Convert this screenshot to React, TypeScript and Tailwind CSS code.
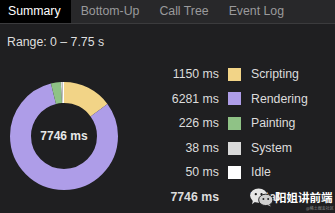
import React from "react";

const segments = [
  { label: "Scripting", ms: 1150, color: "#f2d487" },
  { label: "Rendering", ms: 6281, color: "#ae9de8" },
  { label: "Painting", ms: 226, color: "#8fc286" },
  { label: "System", ms: 38, color: "#dadada" },
  { label: "Idle", ms: 50, color: "#ffffff" },
];

const total = 7746;

const Donut: React.FC = () => {
  const r = 43.5;
  const c = 2 * Math.PI * r;
  let offset = 0;
  return (
    <div className="relative w-[108px] h-[108px]">
      <svg width="108" height="108" viewBox="0 0 108 108" className="-rotate-90">
        {segments.map((s) => {
          const len = (s.ms / total) * c;
          const el = (
            <circle
              key={s.label}
              cx="54"
              cy="54"
              r={r}
              fill="none"
              stroke={s.color}
              strokeWidth="21"
              strokeDasharray={`${len} ${c - len}`}
              strokeDashoffset={-offset}
            />
          );
          offset += len;
          return el;
        })}
      </svg>
      <div className="absolute inset-0 flex items-center justify-center text-[12px] font-bold text-[#e8e8e8]">
        {total} ms
      </div>
    </div>
  );
};

export default function App() {
  const tabs = ["Summary", "Bottom-Up", "Call Tree", "Event Log"];
  return (
    <div
      className="relative w-[335px] h-[213px] overflow-hidden bg-[#1f1f21] text-[#dcdcdc]"
      style={{ fontFamily: '"Liberation Sans", Arial, sans-serif' }}
    >
      <div className="flex h-[24px] bg-[#28282a] border-b border-[#3b3b3d] text-[12.3px]">
        {tabs.map((t, i) => (
          <div
            key={t}
            className={`flex items-center h-[23px] px-[10px] ${
              i === 0 ? "bg-black text-white pl-[8px]" : "text-[#9a9a9c]"
            }`}
          >
            {t}
          </div>
        ))}
      </div>

      <div className="pl-[7px] pt-[10px] leading-[16px] text-[12.3px] text-[#dedede]">
        Range: 0 – 7.75 s
      </div>

      <div className="flex">
        <div className="ml-[10px] mt-[32px]">
          <Donut />
        </div>
        <div className="ml-[41px] mt-[12px] flex flex-col text-[12.3px]">
          {segments.map((s) => (
            <div key={s.label} className="flex items-center h-[24.6px]">
              <div className="w-[60px] text-right">{s.ms} ms</div>
              <div
                className="ml-[9px] w-[13px] h-[13px]"
                style={{ backgroundColor: s.color }}
              />
              <div className="ml-[10px]">{s.label}</div>
            </div>
          ))}
          <div className="flex items-center h-[24.6px] font-bold">
            <div className="w-[60px] text-right">{total} ms</div>
            <div className="ml-[32px]">Total</div>
          </div>
        </div>
      </div>

      {/* watermark */}
      <div className="absolute left-[249px] top-[188px] flex items-center">
        <svg width="25" height="19" viewBox="0 0 26 20">
          <ellipse cx="10" cy="8" rx="9" ry="7.5" fill="#e6e6e6" />
          <path d="M4 13 L3 17 L7 14 Z" fill="#e6e6e6" />
          <circle cx="7" cy="6.5" r="1.2" fill="#1f1f21" />
          <circle cx="13" cy="6.5" r="1.2" fill="#1f1f21" />
          <ellipse cx="17.5" cy="12.5" rx="7.5" ry="6" fill="#cfcfcf" stroke="#1f1f21" strokeWidth="1" />
          <path d="M21 17 L23 19.5 L19 17.5 Z" fill="#cfcfcf" />
          <circle cx="15" cy="11.5" r="1" fill="#1f1f21" />
          <circle cx="20" cy="11.5" r="1" fill="#1f1f21" />
        </svg>
        <div
          className="ml-[1px] text-[11.5px] font-bold text-white leading-none whitespace-nowrap"
          style={{ fontFamily: '"Noto Sans CJK SC", sans-serif' }}
        >
          阳姐讲前端
        </div>
      </div>
      <div
        className="absolute left-[306px] top-[206px] text-[4px] leading-none whitespace-nowrap text-[#8a8a8a]"
        style={{ fontFamily: '"Noto Sans CJK SC", sans-serif' }}
      >
        @稀土掘金社区
      </div>
    </div>
  );
}
